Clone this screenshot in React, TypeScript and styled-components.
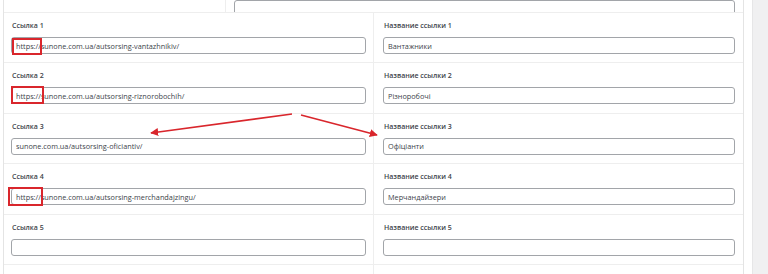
import React from "react";
import styled, { createGlobalStyle } from "styled-components";

interface LinkRow {
  url: string;
  name: string;
  mark?: { left: number; top: number; width: number; height: number };
}

const ROWS: LinkRow[] = [
  {
    url: "https://sunone.com.ua/autsorsing-vantazhnikiv/",
    name: "Вантажники",
    mark: { left: 1, top: 1, width: 30, height: 17 },
  },
  {
    url: "https://sunone.com.ua/autsorsing-riznorobochih/",
    name: "Різноробочі",
    mark: { left: 0, top: -1, width: 33, height: 18 },
  },
  { url: "sunone.com.ua/autsorsing-oficiantiv/", name: "Офіціанти" },
  {
    url: "https://sunone.com.ua/autsorsing-merchandajzingu/",
    name: "Мерчандайзери",
    mark: { left: -3, top: -1, width: 35, height: 19 },
  },
  { url: "", name: "" },
];

const RED = "#d9262c";

const App: React.FC = () => {
  return (
    <>
      <GlobalStyle />
      <Page>
        <Main>
          <Panel>
            <TopRow>
              <TopLabelCell />
              <TopInputCell>
                <TextInput readOnly value="" />
              </TopInputCell>
            </TopRow>
            {ROWS.map((row, i) => (
              <FieldRow key={i}>
                <Cell>
                  <Label>Ссылка {i + 1}</Label>
                  <InputWrap>
                    <TextInput readOnly value={row.url} />
                    {row.mark && (
                      <Mark
                        style={{
                          left: row.mark.left,
                          top: row.mark.top,
                          width: row.mark.width,
                          height: row.mark.height,
                        }}
                      />
                    )}
                  </InputWrap>
                </Cell>
                <Cell $right>
                  <Label>Название ссылки {i + 1}</Label>
                  <InputWrap>
                    <TextInput readOnly value={row.name} />
                  </InputWrap>
                </Cell>
              </FieldRow>
            ))}
            {/* next row, only its top edge is visible */}
            <FieldRow>
              <Cell />
              <Cell $right />
            </FieldRow>
          </Panel>
        </Main>
        <Sidebar />
        <Arrows width="768" height="274" viewBox="0 0 768 274">
          <defs>
            <marker
              id="head"
              viewBox="0 0 10 10"
              refX="9"
              refY="5"
              markerWidth="5"
              markerHeight="5"
              orient="auto-start-reverse"
            >
              <path d="M0 0 L10 5 L0 10 z" fill={RED} />
            </marker>
          </defs>
          <line
            x1="292"
            y1="114"
            x2="151"
            y2="133"
            stroke={RED}
            strokeWidth="1.6"
            markerEnd="url(#head)"
          />
          <line
            x1="301"
            y1="115"
            x2="377"
            y2="135"
            stroke={RED}
            strokeWidth="1.6"
            markerEnd="url(#head)"
          />
        </Arrows>
      </Page>
    </>
  );
};

export default App;

const GlobalStyle = createGlobalStyle`
  html, body {
    margin: 0;
    padding: 0;
    background: #ffffff;
  }
  body {
    font-family: "Open Sans", "Noto Sans", sans-serif;
    overflow: hidden;
  }
`;

const Page = styled.div`
  position: relative;
  display: flex;
  width: 768px;
  height: 274px;
  overflow: hidden;
  background: #ffffff;
`;

const Main = styled.div`
  width: 752px;
  padding-left: 3px;
  box-sizing: border-box;
  background: #ffffff;
`;

const Sidebar = styled.div`
  flex: 1;
  background: #f0f0f1;
  border-left: 1px solid #e6e6e7;
`;

const Panel = styled.div`
  width: 741px;
  border-left: 1px solid #e4e4e4;
  border-right: 1px solid #e4e4e4;
  box-sizing: border-box;
`;

const TopRow = styled.div`
  display: grid;
  grid-template-columns: 221px 1fr;
  height: 12px;
  overflow: hidden;
`;

const TopLabelCell = styled.div``;

const TopInputCell = styled.div`
  display: flex;
  align-items: flex-end;
  border-left: 1px solid #eeeeee;
  padding: 0 8px 8px 8px;

  input {
    height: 24px;
  }
`;

const FieldRow = styled.div`
  display: grid;
  grid-template-columns: 369px 1fr;
  border-top: 1px solid #eeeeee;
  height: 50.4px;
  box-sizing: border-box;
`;

const Cell = styled.div<{ $right?: boolean }>`
  display: flex;
  flex-direction: column;
  padding: ${(p) => (p.$right ? "8px 8px 0 9px" : "8px 7px 0 7px")};
  border-left: ${(p) => (p.$right ? "1px solid #eeeeee" : "none")};
`;

const Label = styled.label`
  font-size: 7px;
  line-height: 10px;
  font-weight: 600;
  color: #3c434a;
  margin-bottom: 6px;
  padding-left: 1px;
  white-space: nowrap;
`;

const InputWrap = styled.div`
  position: relative;
`;

const TextInput = styled.input`
  display: block;
  width: 100%;
  height: 17px;
  box-sizing: border-box;
  margin: 0;
  padding: 0 4px;
  border: 1px solid #a2a5a9;
  border-radius: 3px;
  background: #ffffff;
  font-family: "Open Sans", "Noto Sans", sans-serif;
  font-size: 7.3px;
  color: #3c434a;
  outline: none;
`;

const Mark = styled.span`
  position: absolute;
  box-sizing: border-box;
  border: 2px solid ${RED};
  pointer-events: none;
`;

const Arrows = styled.svg`
  position: absolute;
  left: 0;
  top: 0;
  pointer-events: none;
`;
